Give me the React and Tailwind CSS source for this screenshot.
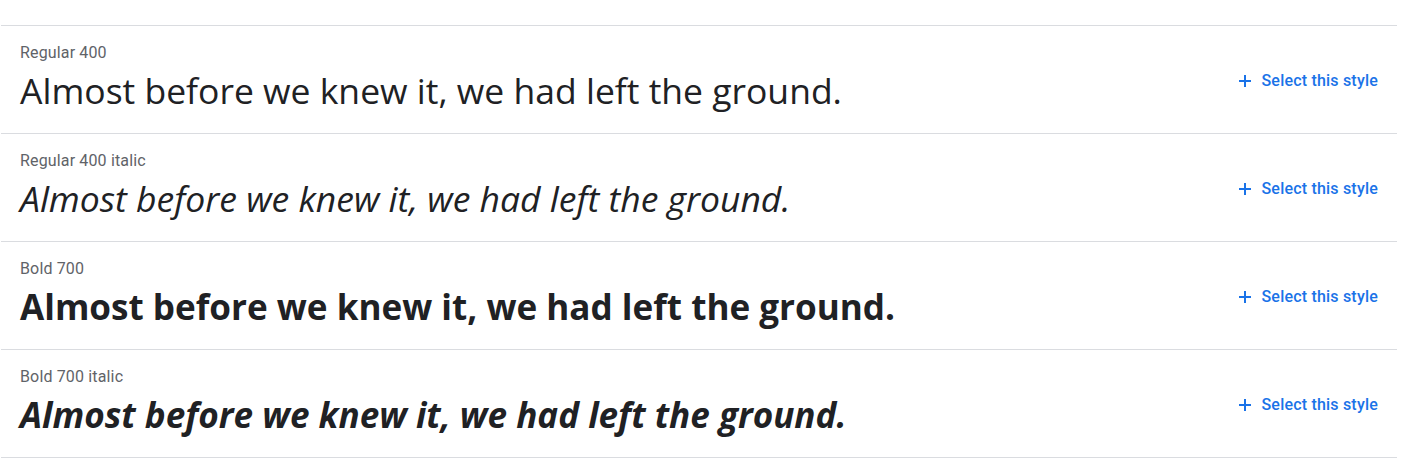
const styles = [
  { label: 'Regular 400', cls: 'font-normal not-italic text-[35.5px]' },
  { label: 'Regular 400 italic', cls: 'font-normal italic text-[35.5px]' },
  { label: 'Bold 700', cls: 'font-bold not-italic text-[35.1px]' },
  { label: 'Bold 700 italic', cls: 'font-bold italic text-[35.1px]' },
];

const PlusIcon = () => (
  <svg className="h-[12px] w-[12px]" viewBox="0 0 12 12" fill="none">
    <path d="M6 0v12M0 6h12" stroke="currentColor" strokeWidth="2" />
  </svg>
);

const App = () => {
  return (
    <div className="min-h-[476px] bg-white pt-[25px] pl-[1px] pr-[6px]">
      <div className="border-t border-[#dadce0]">
        {styles.map((s) => (
          <div
            key={s.label}
            className="flex items-start justify-between border-b border-[#dadce0] h-[108px] pl-[19px] pr-[19px] pt-[15px]"
          >
            <div className="flex flex-col">
              <div className="text-[16px] leading-[24px] tracking-[0.15px] text-[#5f6368] font-['Roboto',sans-serif]">
                {s.label}
              </div>
              <div
                className={`mt-[1px] leading-[48px] text-[#202124] font-['Open_Sans',sans-serif] ${s.cls}`}
              >
                Almost before we knew it, we had left the ground.
              </div>
            </div>
            <button className="flex items-center gap-[10px] mt-[28px] text-[#1a73e8] text-[16px] leading-[24px] tracking-[0.2px] font-medium font-['Roboto',sans-serif]">
              <PlusIcon />
              Select this style
            </button>
          </div>
        ))}
      </div>
    </div>
  );
};

export default App;
